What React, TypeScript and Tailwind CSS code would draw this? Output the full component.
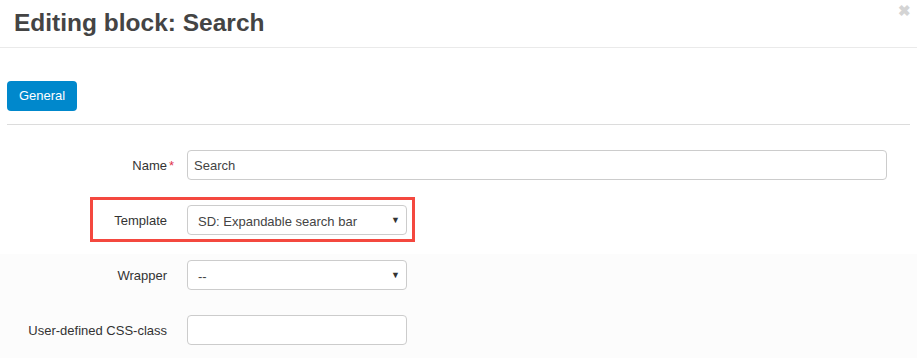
import React from 'react';

const font = { fontFamily: '"Liberation Sans", Arial, sans-serif' };

const Caret: React.FC = () => (
  <span className="pointer-events-none absolute right-[6px] top-1/2 -translate-y-1/2 text-[9px] leading-none text-[#333]">▼</span>
);

const App: React.FC = () => {
  return (
    <div className="relative h-[358px] w-[917px] overflow-hidden bg-white text-[#333]" style={font}>
      {/* Header */}
      <div className="relative flex h-[48px] items-center border-b border-[#eaeaea] px-[14px]">
        <h1 className="text-[24.5px] font-bold leading-none text-[#444]">Editing block: Search</h1>
        <span className="absolute right-[6px] top-[3px] text-[15px] font-bold leading-none text-[#d4d4d4]">✖</span>
      </div>

      {/* Tabs */}
      <div className="mx-[7px] mt-[33px] border-b border-[#dcdcdc] pb-[13px]">
        <button className="flex h-[30px] w-[70px] items-center justify-center rounded-[4px] bg-[#0088cc] text-[13px] text-white">
          General
        </button>
      </div>

      {/* Form */}
      <div className="flex flex-col pt-[25px]">
        <div className="flex h-[55px] items-start">
          <label className="relative mr-[20px] mt-[6px] w-[167px] text-right text-[13px] text-[#333]">
            Name
            <span className="absolute left-[169px] top-0 text-[#e0334d]">*</span>
          </label>
          <input
            readOnly
            value="Search"
            className="h-[30px] w-[700px] rounded-[4px] border border-[#ccc] px-[6px] text-[13px] text-[#444] outline-none"
            style={font}
          />
        </div>

        <div className="relative flex h-[55px] items-start">
          <div className="absolute left-[90px] top-[-8px] h-[45px] w-[325px] border-[3px] border-[#f4483f]" />
          <label className="mr-[20px] mt-[6px] w-[167px] text-right text-[13px] text-[#333]">Template</label>
          <div className="relative h-[30px] w-[220px] rounded-[4px] border border-[#ccc] bg-white">
            <span className="absolute left-[10px] top-[6px] text-[13px] text-[#444]">SD: Expandable search bar</span>
            <Caret />
          </div>
        </div>

        <div className="-mt-[6px] flex flex-col bg-[#fcfcfc] pt-[6px]">
          <div className="flex h-[55px] items-start">
            <label className="mr-[20px] mt-[6px] w-[167px] text-right text-[13px] text-[#333]">Wrapper</label>
            <div className="relative h-[30px] w-[220px] rounded-[4px] border border-[#ccc] bg-white">
              <span className="absolute left-[10px] top-[6px] text-[13px] text-[#444]">--</span>
              <Caret />
            </div>
          </div>

          <div className="flex h-[60px] items-start">
            <label className="mr-[20px] mt-[6px] w-[167px] text-right text-[13px] text-[#333]">User-defined CSS-class</label>
            <input
              readOnly
              className="h-[30px] w-[220px] rounded-[4px] border border-[#ccc] bg-white px-[6px] text-[13px] outline-none"
            />
          </div>
        </div>
      </div>
    </div>
  );
};

export default App;
